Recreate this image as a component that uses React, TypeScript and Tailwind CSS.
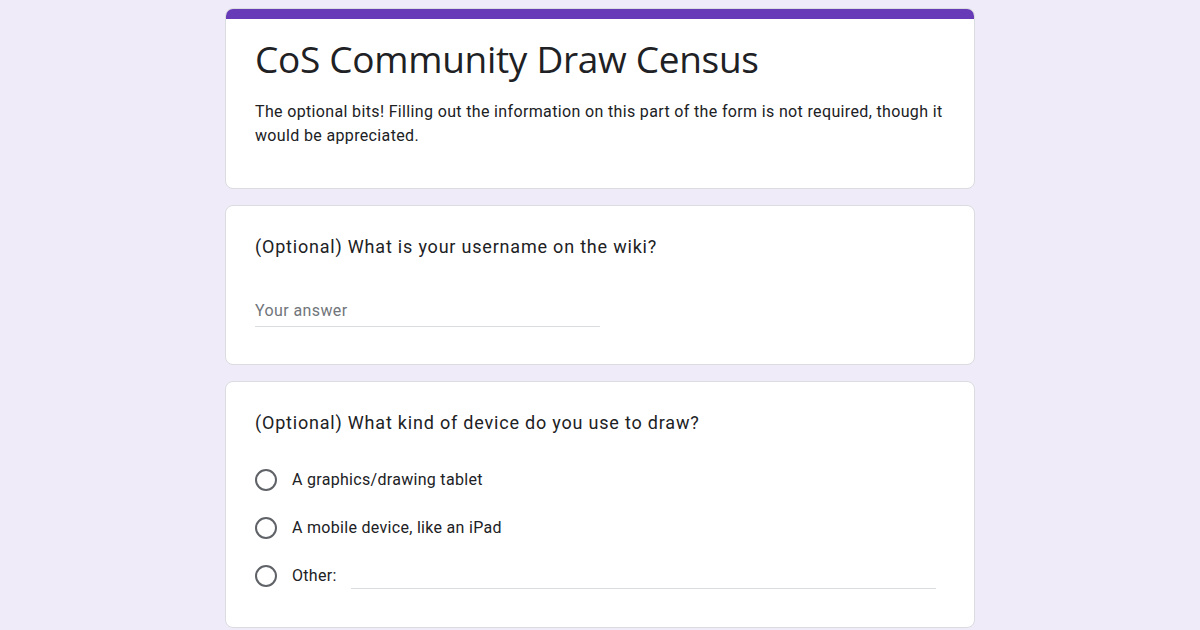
const options = ["A graphics/drawing tablet", "A mobile device, like an iPad"];

function Radio() {
  return <span className="block w-[22px] h-[22px] shrink-0 rounded-full border-2 border-[#5f6368]" />;
}

export default function App() {
  return (
    <div className="w-[1200px] h-[630px] overflow-hidden bg-[#f0ebf8] font-['Roboto',sans-serif] text-[#202124]">
      <div className="w-[750px] mx-auto pt-2 flex flex-col gap-4">
        {/* header card */}
        <div className="rounded-lg bg-white border border-[#dadce0] overflow-hidden">
          <div className="h-[10px] bg-[#673ab7]" />
          <div className="px-[29px] pt-[20px] pb-[40px]">
            <h1 className="text-[37px] leading-[40px] font-['Open_Sans',sans-serif] tracking-[-0.3px]">
              CoS Community Draw Census
            </h1>
            <p className="mt-[21px] text-[16px] leading-[24px] tracking-[0.35px]">
              The optional bits! Filling out the information on this part of the form is not required, though it
              would be appreciated.
            </p>
          </div>
        </div>

        {/* username */}
        <div className="rounded-lg bg-white border border-[#dadce0] px-[29px] pt-[29px] pb-[37px]">
          <div className="text-[18px] leading-[24px] tracking-[0.8px]">
            (Optional) What is your username on the wiki?
          </div>
          <div className="mt-[42px] w-[345px] border-b border-[#dadce0] pb-[5px] text-[16px] leading-[20px] tracking-[0.4px] text-[#70757a]">
            Your answer
          </div>
        </div>

        {/* device */}
        <div className="rounded-lg bg-white border border-[#dadce0] px-[29px] pt-[29px] pb-[27px]">
          <div className="text-[18px] leading-[24px] tracking-[0.8px]">
            (Optional) What kind of device do you use to draw?
          </div>
          <div className="mt-[21px] flex flex-col">
            {options.map((o) => (
              <div key={o} className="h-[48px] flex items-center gap-[15px] text-[16px] tracking-[0.3px]">
                <Radio />
                <span>{o}</span>
              </div>
            ))}
            <div className="h-[48px] flex items-center gap-[15px] text-[16px] tracking-[0.3px]">
              <Radio />
              <div className="flex-1 flex items-center gap-[14px] mr-[9px]">
                <span>Other:</span>
                <div className="flex-1 mt-[24px] border-b border-[#dadce0]" />
              </div>
            </div>
          </div>
        </div>
      </div>
    </div>
  );
}
